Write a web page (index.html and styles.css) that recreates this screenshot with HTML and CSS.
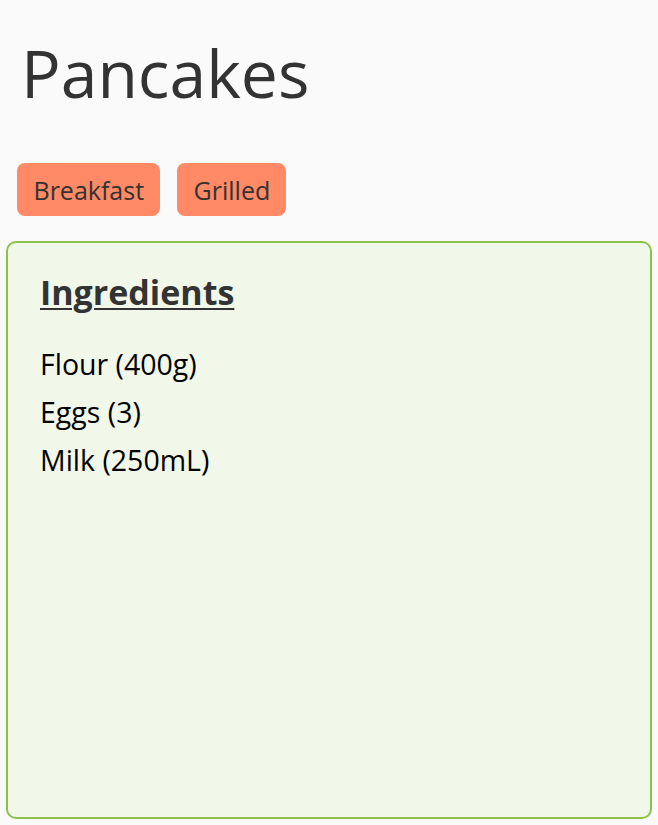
FILE: index.html
```html
<!DOCTYPE html>
<html>
<head>
<meta charset="utf-8">
<link rel="stylesheet" href="styles.css">
</head>
<body>
<main class="recipe">
  <h1 class="title">Pancakes</h1>
  <div class="tags">
    <span class="tag">Breakfast</span>
    <span class="tag">Grilled</span>
  </div>
  <section class="card">
    <h2 class="card-title">Ingredients</h2>
    <ul class="ingredients">
      <li>Flour (400g)</li>
      <li>Eggs (3)</li>
      <li>Milk (250mL)</li>
    </ul>
  </section>
</main>
</body>
</html>
```
FILE: styles.css
```css
html, body {
  margin: 0;
  padding: 0;
}
body {
  background: #fafafa;
  font-family: "Open Sans", "Noto Sans", sans-serif;
  color: #333;
  width: 658px;
  height: 825px;
  overflow: hidden;
}
.recipe {
  padding: 0 6px 6px 6px;
  display: flex;
  flex-direction: column;
  height: 825px;
  box-sizing: border-box;
}
.title {
  margin: 27px 0 0 15px;
  font-size: 66px;
  font-weight: 400;
  line-height: 90px;
  color: #333;
}
.tags {
  display: flex;
  gap: 17px;
  margin: 46px 0 0 11px;
}
.tag {
  background: #ff8a65;
  border-radius: 8px;
  height: 53px;
  padding: 0 16px 0 16.5px;
  display: flex;
  align-items: center;
  font-size: 25px;
  color: #333;
}
.card {
  margin-top: 25px;
  flex: 1;
  background: #f1f8e9;
  border: 2px solid #8bc34a;
  border-radius: 10px;
  padding: 25px 32px;
}
.card-title {
  margin: 0;
  font-size: 34px;
  font-weight: 700;
  text-decoration: underline;
  text-decoration-thickness: 2px;
  text-underline-offset: 3px;
  color: #333;
  line-height: 48px;
}
.ingredients {
  list-style: none;
  margin: 24px 0 0 0;
  padding: 0;
  color: #000;
  font-size: 28.5px;
  line-height: 48px;
}
```
